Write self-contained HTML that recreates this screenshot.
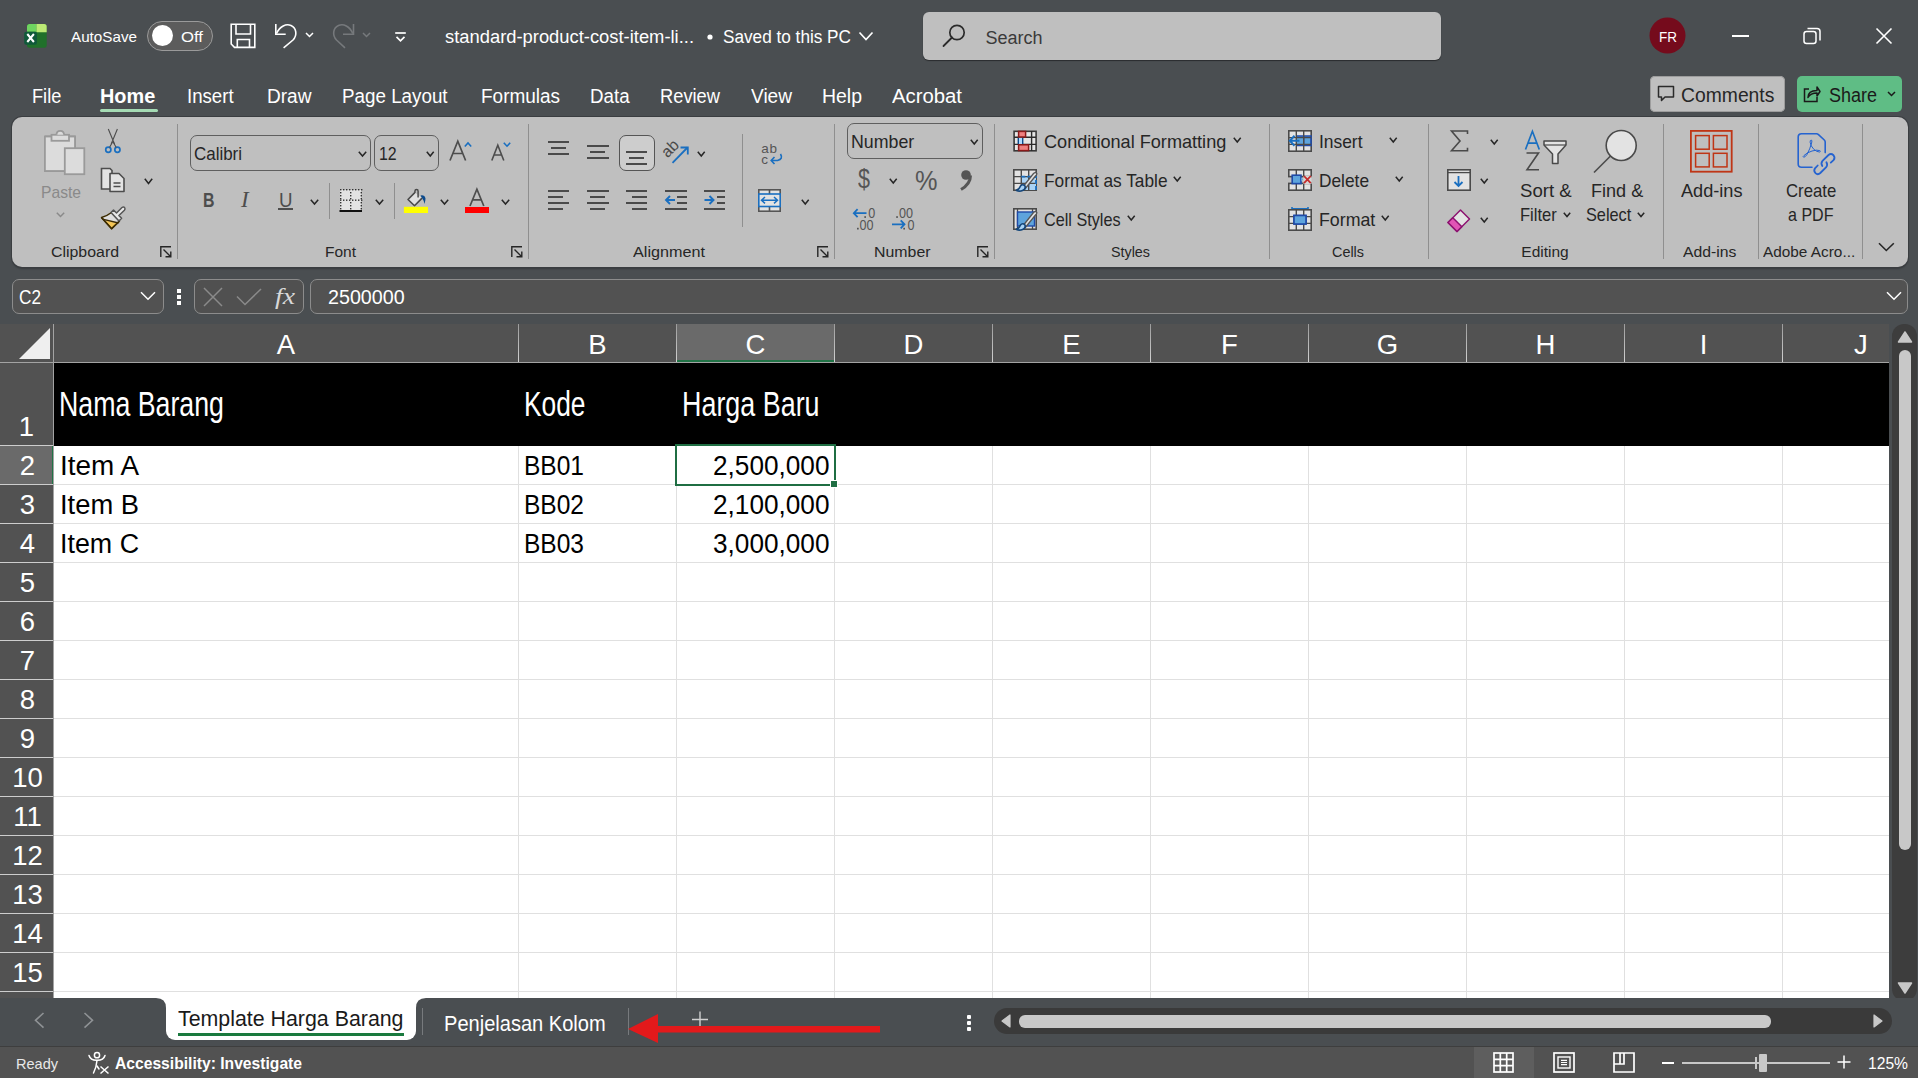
<!DOCTYPE html>
<html><head><meta charset="utf-8">
<style>
*{margin:0;padding:0;box-sizing:border-box}
html,body{width:1918px;height:1078px;overflow:hidden;background:#4a4e51;font-family:"Liberation Sans",sans-serif;position:relative}
.a{position:absolute}
.t{position:absolute;white-space:nowrap;line-height:1}
svg{position:absolute;overflow:visible}
</style></head><body>
<!-- p_title -->
<svg style="left:20px;top:20px;" width="30" height="30" viewBox="0 0 30 30"><rect x="7" y="3.9" width="19.7" height="23.9" rx="2.5" fill="#20702a"/><path d="M9.5 3.9 H16.4 V11.7 H7 V6.4 Q7 3.9 9.5 3.9 Z" fill="#6fd460"/><path d="M16.4 3.9 H24.2 Q26.7 3.9 26.7 6.4 V12.2 H16.4 Z" fill="#bdea75"/><rect x="4.2" y="11.7" width="12.8" height="13.1" rx="2" fill="#10593a"/><path d="M7.3 14 L13.9 22 M13.9 14 L7.3 22" stroke="#fff" stroke-width="2"/></svg>
<div class="t" style="left:71.30px;top:29.20px;font-size:15px;color:#ffffff;transform:scaleX(1.0147);transform-origin:0 0;">AutoSave</div>
<div class="a" style="left:147px;top:21px;width:66px;height:30px;background:#5c5c5c;border:1.5px solid #9a9a9a;border-radius:15px;"></div>
<svg style="left:152px;top:25px;" width="21" height="21" viewBox="0 0 21 21"><circle cx="10.5" cy="10.5" r="10.5" fill="#fff"/></svg>
<div class="t" style="left:181.00px;top:29.30px;font-size:15px;color:#ffffff;transform:scaleX(1.1150);transform-origin:0 0;">Off</div>
<svg style="left:230px;top:23px;" width="26" height="26" viewBox="0 0 26 26"><path d="M1.2 1.2 H24.8 V24.4 H4.5 L1.2 21 Z" fill="none" stroke="#fff" stroke-width="1.6" stroke-linejoin="miter"/><path d="M6 1.2 V11 H20.5 V1.2" fill="none" stroke="#fff" stroke-width="1.6"/><path d="M7.3 24.4 V16.5 H19.5 V24.4" fill="none" stroke="#fff" stroke-width="1.6"/></svg>
<svg style="left:272px;top:22px;" width="28" height="28" viewBox="0 0 28 28"><path d="M3.8 2 V12.3 H13.7" fill="none" stroke="#fff" stroke-width="1.6"/><path d="M4.5 11.5 C8 4 14 1.5 19 3.5 C24.5 6 25.5 13 21 18 L11.6 25.8" fill="none" stroke="#fff" stroke-width="1.6"/></svg>
<svg style="left:305px;top:31px;" width="10" height="8" viewBox="0 0 10 8"><path d="M1 2 L4.5 5.5 L8 2" fill="none" stroke="#fff" stroke-width="1.5"/></svg>
<svg style="left:331px;top:22px;" width="26" height="28" viewBox="0 0 26 28"><path d="M22.5 2 V12.3 H12" fill="none" stroke="#76797c" stroke-width="1.6"/><path d="M21.8 11.5 C18.5 4 12.5 1.5 7.5 3.5 C2 6 1 13 5.5 18 L14 25.8" fill="none" stroke="#76797c" stroke-width="1.6"/></svg>
<svg style="left:362px;top:31px;" width="10" height="8" viewBox="0 0 10 8"><path d="M1 2 L4.5 5.5 L8 2" fill="none" stroke="#76797c" stroke-width="1.5"/></svg>
<svg style="left:394px;top:30.5px;" width="13" height="13" viewBox="0 0 13 13"><path d="M1.2 2 H11.8" stroke="#fff" stroke-width="1.7"/><path d="M2.5 5.8 L6.5 9.8 L10.5 5.8" fill="none" stroke="#fff" stroke-width="1.7"/></svg>
<div class="t" style="left:444.60px;top:28.16px;font-size:18px;color:#ffffff;transform:scaleX(1.0201);transform-origin:0 0;">standard-product-cost-item-li...</div>
<svg style="left:706px;top:33px;" width="8" height="8" viewBox="0 0 8 8"><circle cx="4" cy="4" r="2.6" fill="#fff"/></svg>
<div class="t" style="left:722.80px;top:28.16px;font-size:18px;color:#ffffff;transform:scaleX(0.9547);transform-origin:0 0;">Saved to this PC</div>
<svg style="left:858px;top:31px;" width="16" height="11" viewBox="0 0 16 11"><path d="M1.5 1.5 L8 8.5 L14.5 1.5" fill="none" stroke="#fff" stroke-width="1.7"/></svg>
<div class="a" style="left:923px;top:12px;width:518px;height:48px;background:#bfbfbf;border-radius:6px;box-shadow:0 1px 1px #2a2c2e;"></div>
<svg style="left:942px;top:24px;" width="24" height="24" viewBox="0 0 24 24"><circle cx="15" cy="8.5" r="7.2" fill="none" stroke="#2b2b2b" stroke-width="1.7"/><path d="M10 13.5 L1.5 22" stroke="#2b2b2b" stroke-width="1.8" stroke-linecap="round"/></svg>
<div class="t" style="left:985.40px;top:28.76px;font-size:18px;color:#3a3a3a;">Search</div>
<svg style="left:1649px;top:17px;" width="37" height="37" viewBox="0 0 37 37"><circle cx="18.5" cy="18.5" r="18" fill="#750b1c"/></svg>
<div class="t" style="left:1658.60px;top:29.30px;font-size:15px;color:#fff;transform:scaleX(0.9002);transform-origin:0 0;">FR</div>
<div class="a" style="left:1732px;top:35px;width:17px;height:1.5px;background:#fff;"></div>
<svg style="left:1803px;top:27px;" width="19" height="18" viewBox="0 0 19 18"><rect x="1" y="4.5" width="12" height="12" rx="2.5" fill="none" stroke="#fff" stroke-width="1.5"/><path d="M4.5 1.5 H14 Q17 1.5 17 4.5 V13.5" fill="none" stroke="#fff" stroke-width="1.5"/></svg>
<svg style="left:1875px;top:27px;" width="18" height="18" viewBox="0 0 18 18"><path d="M1.5 1.5 L16.5 16.5 M16.5 1.5 L1.5 16.5" stroke="#fff" stroke-width="1.6"/></svg>
<div class="t" style="left:31.50px;top:86.17px;font-size:20px;color:#ffffff;transform:scaleX(0.9091);transform-origin:0 0;">File</div>
<div class="t" style="left:100.30px;top:86.17px;font-size:20px;color:#ffffff;font-weight:bold;transform:scaleX(0.9934);transform-origin:0 0;">Home</div>
<div class="t" style="left:187.40px;top:86.17px;font-size:20px;color:#ffffff;transform:scaleX(0.9316);transform-origin:0 0;">Insert</div>
<div class="t" style="left:266.50px;top:86.17px;font-size:20px;color:#ffffff;transform:scaleX(0.9535);transform-origin:0 0;">Draw</div>
<div class="t" style="left:342.00px;top:86.17px;font-size:20px;color:#ffffff;transform:scaleX(0.9402);transform-origin:0 0;">Page Layout</div>
<div class="t" style="left:480.70px;top:86.17px;font-size:20px;color:#ffffff;transform:scaleX(0.9490);transform-origin:0 0;">Formulas</div>
<div class="t" style="left:589.70px;top:86.17px;font-size:20px;color:#ffffff;transform:scaleX(0.9373);transform-origin:0 0;">Data</div>
<div class="t" style="left:660.00px;top:86.17px;font-size:20px;color:#ffffff;transform:scaleX(0.9149);transform-origin:0 0;">Review</div>
<div class="t" style="left:751.00px;top:86.17px;font-size:20px;color:#ffffff;transform:scaleX(0.9537);transform-origin:0 0;">View</div>
<div class="t" style="left:822.00px;top:86.17px;font-size:20px;color:#ffffff;transform:scaleX(0.9724);transform-origin:0 0;">Help</div>
<div class="t" style="left:892.00px;top:86.17px;font-size:20px;color:#ffffff;transform:scaleX(1.0156);transform-origin:0 0;">Acrobat</div>
<div class="a" style="left:100px;top:109px;width:58px;height:3px;background:#a5dbb4;border-radius:2px;"></div>
<div class="a" style="left:1650px;top:76px;width:135px;height:36px;background:#bfbfbf;border-radius:5px;box-shadow:inset 0 0 0 1px #9d9d9d;"></div>
<svg style="left:1657px;top:85px;" width="18" height="18" viewBox="0 0 18 18"><path d="M1.5 1.5 H16.5 V12 H8 L4.5 15.5 V12 H1.5 Z" fill="none" stroke="#2b2b2b" stroke-width="1.5" stroke-linejoin="round"/></svg>
<div class="t" style="left:1681.40px;top:85.79px;font-size:19.5px;color:#262626;transform:scaleX(0.9907);transform-origin:0 0;">Comments</div>
<div class="a" style="left:1797px;top:76px;width:105px;height:36px;background:#5fbd85;border-radius:5px;"></div>
<svg style="left:1803px;top:85px;" width="18" height="18" viewBox="0 0 18 18"><path d="M6 4 H1.5 V16.5 H14 V12" fill="none" stroke="#1a1a1a" stroke-width="1.5"/><path d="M5 12.5 C5 7.5 9 5.5 14 5.5 V2 L17 6.5 L14 11 V8 C10 8 7 9 5 12.5 Z" fill="none" stroke="#1a1a1a" stroke-width="1.5" stroke-linejoin="round"/></svg>
<div class="t" style="left:1828.60px;top:85.79px;font-size:19.5px;color:#1a1a1a;transform:scaleX(0.9224);transform-origin:0 0;">Share</div>
<svg style="left:1887px;top:91px;" width="9" height="6" viewBox="0 0 9 6"><path d="M1 1 L4.5 4.5 L8 1" fill="none" stroke="#1a1a1a" stroke-width="1.5"/></svg>
<!-- p_ribbon -->
<div class="a" style="left:12px;top:117px;width:1896px;height:150px;background:#bfbfbf;border-radius:10px;box-shadow:0 0 0 1px #3a3d40,0 2px 2px rgba(0,0,0,0.25);"></div>
<svg style="left:44px;top:130px;" width="41" height="45" viewBox="0 0 41 45"><path d="M0.9 6.5 H31 V17.5 M20.5 41 H0.9 Z" fill="#dcdcdc" stroke="#9a9a9a" stroke-width="1.8" stroke-linejoin="round"/><rect x="0.9" y="6.5" width="30.1" height="34.5" fill="#dcdcdc" stroke="#9a9a9a" stroke-width="1.8"/><rect x="7.5" y="4.8" width="17.5" height="6" fill="#dcdcdc" stroke="#9a9a9a" stroke-width="1.8"/><path d="M12.5 4.8 Q12.5 0.9 16.2 0.9 Q20 0.9 20 4.8" fill="#dcdcdc" stroke="#9a9a9a" stroke-width="1.8"/><rect x="20.8" y="18.2" width="19.5" height="26" fill="#dcdcdc" stroke="#9a9a9a" stroke-width="1.8"/></svg>
<div class="t" style="left:41.00px;top:184.21px;font-size:17px;color:#8a8a8a;transform:scaleX(0.9201);transform-origin:0 0;">Paste</div>
<svg style="left:56px;top:212px;" width="9" height="5" viewBox="0 0 9 5"><path d="M0.8 0.8 L4.5 4.5 L8.2 0.8" fill="none" stroke="#8a8a8a" stroke-width="1.5"/></svg>
<svg style="left:104px;top:128px;" width="18" height="26" viewBox="0 0 18 26"><path d="M4.3 1 L10.5 16 M13.4 1 L7.2 16" stroke="#4d4d4d" stroke-width="1.1"/><circle cx="4.3" cy="21.8" r="2.6" fill="none" stroke="#1a6fc0" stroke-width="1.7"/><circle cx="13.4" cy="21.8" r="2.6" fill="none" stroke="#1a6fc0" stroke-width="1.7"/><path d="M5.5 19.5 L8.5 14 M12.2 19.5 L9.2 14" stroke="#4d4d4d" stroke-width="1.1"/></svg>
<svg style="left:100px;top:167px;" width="26" height="26" viewBox="0 0 26 26"><path d="M1.5 1.5 H10 L12 3.5 V22 H1.5 Z" fill="#e3e3e3" stroke="#4d4d4d" stroke-width="1.6"/><path d="M10 6.5 H19 L24 11.5 V24.5 H10 Z" fill="#e3e3e3" stroke="#4d4d4d" stroke-width="1.6" stroke-linejoin="round"/><path d="M13.5 16 H20.5 M13.5 19.5 H20.5" stroke="#4d4d4d" stroke-width="1.4"/></svg>
<svg style="left:144px;top:178px;" width="9" height="6" viewBox="0 0 9 6"><path d="M0.8 0.8 L4.5 5.5 L8.2 0.8" fill="none" stroke="#262626" stroke-width="1.5"/></svg>
<svg style="left:95px;top:200px;" width="35" height="35" viewBox="0 0 35 35"><path d="M6.5 17.5 Q12 16 16.5 12.5 L24.5 21 L16.6 28.6 Z" fill="#dedede" stroke="#3d2c00" stroke-width="1.5" stroke-linejoin="round"/><path d="M10.5 20.5 L23 23.5 L16.6 28.2 Z" fill="#f5c656"/><path d="M8.5 19.3 L23.5 23" stroke="#3b2a00" stroke-width="1.3"/><path d="M6.5 17.5 L16.6 28.6 L24.5 21" fill="none" stroke="#3d2c00" stroke-width="1.6" stroke-linejoin="round"/><path d="M16 12.5 L18.5 10 L21.5 13 L27 7.5 Q28.5 6.3 29.6 7.6 Q30.6 8.9 29.4 10.2 L23.9 15.5 L26.6 18.3 L24 21 Z" fill="#e8e8e8" stroke="#555" stroke-width="1.5" stroke-linejoin="round"/></svg>
<div class="t" style="left:51.00px;top:244.18px;font-size:15.5px;color:#262626;transform:scaleX(1.0250);transform-origin:0 0;">Clipboard</div>
<svg style="left:160px;top:246px;" width="12" height="12" viewBox="0 0 12 12"><path d="M0.8 11 V0.8 H11" fill="none" stroke="#262626" stroke-width="1.4"/><path d="M3.5 3.5 L10.5 10.5 M5.5 10.8 H10.8 V5.5" fill="none" stroke="#262626" stroke-width="1.4"/></svg>
<div class="a" style="left:177px;top:124px;width:1px;height:135px;background:#8f8f8f;"></div>
<div class="a" style="left:190px;top:135px;width:181px;height:36px;background:transparent;border:1px solid #5f5f5f;border-radius:7px;"></div>
<div class="t" style="left:193.50px;top:145.14px;font-size:18.5px;color:#262626;transform:scaleX(0.9156);transform-origin:0 0;">Calibri</div>
<svg style="left:358px;top:151px;" width="9" height="5.5" viewBox="0 0 9 5.5"><path d="M0.8 0.8 L4.5 5.0 L8.2 0.8" fill="none" stroke="#262626" stroke-width="1.5"/></svg>
<div class="a" style="left:374px;top:135px;width:65px;height:36px;background:transparent;border:1px solid #5f5f5f;border-radius:7px;"></div>
<div class="t" style="left:378.50px;top:145.14px;font-size:18.5px;color:#262626;transform:scaleX(0.8601);transform-origin:0 0;">12</div>
<svg style="left:426px;top:151px;" width="8.5" height="5.5" viewBox="0 0 8.5 5.5"><path d="M0.8 0.8 L4.25 5.0 L7.7 0.8" fill="none" stroke="#262626" stroke-width="1.5"/></svg>
<svg style="left:449px;top:140px;" width="18" height="21" viewBox="0 0 18 21"><path d="M1 20.5 L8.8 1.2 L16.6 20.5 M4.2 13.5 H13.4" fill="none" stroke="#4d4d4d" stroke-width="1.7"/></svg>
<svg style="left:464px;top:142px;" width="8" height="5" viewBox="0 0 8 5"><path d="M0.8 4.5 L4 1 L7.2 4.5" fill="none" stroke="#1a6fc0" stroke-width="1.6"/></svg>
<svg style="left:491px;top:144px;" width="14" height="17" viewBox="0 0 14 17"><path d="M0.8 16.5 L6.8 1.2 L12.8 16.5 M3.3 11 H10.3" fill="none" stroke="#4d4d4d" stroke-width="1.6"/></svg>
<svg style="left:503px;top:142px;" width="8" height="5" viewBox="0 0 8 5"><path d="M0.8 0.8 L4 4.2 L7.2 0.8" fill="none" stroke="#1a6fc0" stroke-width="1.6"/></svg>
<div class="t" style="left:202.50px;top:189.22px;font-size:21px;color:#4d4d4d;font-weight:bold;transform:scaleX(0.7583);transform-origin:0 0;">B</div>
<div class="t" style="left:241.00px;top:187.53px;font-size:23px;color:#4d4d4d;font-style:italic;font-family:'Liberation Serif';">I</div>
<div class="t" style="left:278.50px;top:189.22px;font-size:21px;color:#4d4d4d;transform:scaleX(0.8902);transform-origin:0 0;">U</div>
<div class="a" style="left:278px;top:208px;width:15px;height:1.8px;background:#4d4d4d;"></div>
<svg style="left:310px;top:199px;" width="9" height="5.5" viewBox="0 0 9 5.5"><path d="M0.8 0.8 L4.5 5.0 L8.2 0.8" fill="none" stroke="#262626" stroke-width="1.5"/></svg>
<div class="a" style="left:329px;top:183px;width:1px;height:36px;background:#8f8f8f;"></div>
<svg style="left:339px;top:189px;" width="23" height="23" viewBox="0 0 23 23"><rect x="1" y="1" width="21" height="20" fill="#e3e3e3"/><rect x="1" y="0" width="1.4" height="1.4" fill="#333"/><rect x="1" y="10.5" width="1.4" height="1.4" fill="#333"/><rect x="4" y="0" width="1.4" height="1.4" fill="#333"/><rect x="4" y="10.5" width="1.4" height="1.4" fill="#333"/><rect x="7" y="0" width="1.4" height="1.4" fill="#333"/><rect x="7" y="10.5" width="1.4" height="1.4" fill="#333"/><rect x="10" y="0" width="1.4" height="1.4" fill="#333"/><rect x="10" y="10.5" width="1.4" height="1.4" fill="#333"/><rect x="13" y="0" width="1.4" height="1.4" fill="#333"/><rect x="13" y="10.5" width="1.4" height="1.4" fill="#333"/><rect x="16" y="0" width="1.4" height="1.4" fill="#333"/><rect x="16" y="10.5" width="1.4" height="1.4" fill="#333"/><rect x="19" y="0" width="1.4" height="1.4" fill="#333"/><rect x="19" y="10.5" width="1.4" height="1.4" fill="#333"/><rect x="22" y="0" width="1.4" height="1.4" fill="#333"/><rect x="22" y="10.5" width="1.4" height="1.4" fill="#333"/><rect x="1" y="3" width="1.4" height="1.4" fill="#333"/><rect x="1" y="6" width="1.4" height="1.4" fill="#333"/><rect x="1" y="9" width="1.4" height="1.4" fill="#333"/><rect x="1" y="13" width="1.4" height="1.4" fill="#333"/><rect x="1" y="16" width="1.4" height="1.4" fill="#333"/><rect x="1" y="19" width="1.4" height="1.4" fill="#333"/><rect x="11" y="3" width="1.4" height="1.4" fill="#333"/><rect x="11" y="6" width="1.4" height="1.4" fill="#333"/><rect x="11" y="9" width="1.4" height="1.4" fill="#333"/><rect x="11" y="13" width="1.4" height="1.4" fill="#333"/><rect x="11" y="16" width="1.4" height="1.4" fill="#333"/><rect x="11" y="19" width="1.4" height="1.4" fill="#333"/><rect x="21.6" y="3" width="1.4" height="1.4" fill="#333"/><rect x="21.6" y="6" width="1.4" height="1.4" fill="#333"/><rect x="21.6" y="9" width="1.4" height="1.4" fill="#333"/><rect x="21.6" y="13" width="1.4" height="1.4" fill="#333"/><rect x="21.6" y="16" width="1.4" height="1.4" fill="#333"/><rect x="21.6" y="19" width="1.4" height="1.4" fill="#333"/><rect x="0.5" y="21" width="22.5" height="2" fill="#111"/></svg>
<svg style="left:375px;top:199px;" width="9" height="5.5" viewBox="0 0 9 5.5"><path d="M0.8 0.8 L4.5 5.0 L8.2 0.8" fill="none" stroke="#262626" stroke-width="1.5"/></svg>
<div class="a" style="left:394px;top:183px;width:1px;height:36px;background:#8f8f8f;"></div>
<svg style="left:400px;top:185px;" width="30" height="30" viewBox="0 0 30 30"><path d="M8 14.5 L14.8 7.6 L22 13.1 L14.5 20.8 Z" fill="#e0e0e0"/><path d="M14.8 7.6 L8 14.5 L14.5 20.8 L22 13.1" fill="none" stroke="#4a4a4a" stroke-width="1.6" stroke-linejoin="round"/><path d="M14.9 8 V6.3 Q15 4.6 16.6 4.6 Q18.1 4.6 18.1 6.3 V12.5" fill="none" stroke="#4a4a4a" stroke-width="1.5"/><path d="M20.5 10.5 Q24.5 9.5 25.5 13.5 Q25.5 16.5 24.3 19 Q23.8 15 22 13 Z" fill="#0d4b8c"/><rect x="3.9" y="21.8" width="24.1" height="6.2" fill="#ffff00"/></svg>
<svg style="left:440px;top:199px;" width="9" height="5.5" viewBox="0 0 9 5.5"><path d="M0.8 0.8 L4.5 5.0 L8.2 0.8" fill="none" stroke="#262626" stroke-width="1.5"/></svg>
<svg style="left:469px;top:188px;" width="16" height="19" viewBox="0 0 16 19"><path d="M1 18 L7.9 1.2 L14.8 18 M3.8 11.8 H12" fill="none" stroke="#4d4d4d" stroke-width="1.7"/></svg>
<div class="a" style="left:465px;top:207px;width:24px;height:6px;background:#ff0000;"></div>
<svg style="left:501px;top:199px;" width="9" height="5.5" viewBox="0 0 9 5.5"><path d="M0.8 0.8 L4.5 5.0 L8.2 0.8" fill="none" stroke="#262626" stroke-width="1.5"/></svg>
<div class="t" style="left:325.00px;top:244.18px;font-size:15.5px;color:#262626;">Font</div>
<svg style="left:511px;top:246px;" width="12" height="12" viewBox="0 0 12 12"><path d="M0.8 11 V0.8 H11" fill="none" stroke="#262626" stroke-width="1.4"/><path d="M3.5 3.5 L10.5 10.5 M5.5 10.8 H10.8 V5.5" fill="none" stroke="#262626" stroke-width="1.4"/></svg>
<div class="a" style="left:528px;top:124px;width:1px;height:135px;background:#8f8f8f;"></div>
<div class="a" style="left:548px;top:140.7px;width:21.4px;height:2px;background:#4a4a4a;"></div>
<div class="a" style="left:551.2px;top:146.7px;width:15.100000000000001px;height:2px;background:#4a4a4a;"></div>
<div class="a" style="left:548px;top:152.7px;width:21.4px;height:2px;background:#4a4a4a;"></div>
<div class="a" style="left:587px;top:145px;width:21.6px;height:2px;background:#4a4a4a;"></div>
<div class="a" style="left:590.2px;top:151.1px;width:15.3px;height:2px;background:#4a4a4a;"></div>
<div class="a" style="left:587px;top:157.2px;width:21.6px;height:2px;background:#4a4a4a;"></div>
<div class="a" style="left:619px;top:135px;width:36px;height:36px;background:#cdcdcd;border:1px solid #555;border-radius:7px;"></div>
<div class="a" style="left:626px;top:151.1px;width:21.4px;height:2px;background:#4a4a4a;"></div>
<div class="a" style="left:629.4px;top:157.2px;width:14.9px;height:2px;background:#4a4a4a;"></div>
<div class="a" style="left:626px;top:163.1px;width:21.4px;height:2px;background:#4a4a4a;"></div>
<svg style="left:663px;top:139px;" width="28" height="26" viewBox="0 0 28 26"><text x="0" y="0" transform="translate(4.5,19.5) rotate(-45)" font-family="Liberation Sans" font-size="16" fill="#4a4a4a">ab</text><path d="M9.5 23.8 L24.5 8.5" stroke="#1a6fc0" stroke-width="1.8"/><path d="M17.5 8.5 H24.8 V15.5" fill="none" stroke="#1a6fc0" stroke-width="1.8"/></svg>
<svg style="left:697px;top:151px;" width="8.5" height="5.5" viewBox="0 0 8.5 5.5"><path d="M0.8 0.8 L4.25 5.0 L7.7 0.8" fill="none" stroke="#262626" stroke-width="1.5"/></svg>
<div class="a" style="left:548px;top:190px;width:21.4px;height:2px;background:#4a4a4a;"></div>
<div class="a" style="left:548px;top:196px;width:15.4px;height:2px;background:#4a4a4a;"></div>
<div class="a" style="left:548px;top:202.1px;width:21.4px;height:2px;background:#4a4a4a;"></div>
<div class="a" style="left:548px;top:208px;width:15.4px;height:2px;background:#4a4a4a;"></div>
<div class="a" style="left:587px;top:190px;width:21.6px;height:2px;background:#4a4a4a;"></div>
<div class="a" style="left:590.2px;top:196px;width:15.3px;height:2px;background:#4a4a4a;"></div>
<div class="a" style="left:587px;top:202.1px;width:21.6px;height:2px;background:#4a4a4a;"></div>
<div class="a" style="left:590.2px;top:208px;width:15.3px;height:2px;background:#4a4a4a;"></div>
<div class="a" style="left:626px;top:190px;width:21.4px;height:2px;background:#4a4a4a;"></div>
<div class="a" style="left:632px;top:196px;width:15.399999999999999px;height:2px;background:#4a4a4a;"></div>
<div class="a" style="left:626px;top:202.1px;width:21.4px;height:2px;background:#4a4a4a;"></div>
<div class="a" style="left:632px;top:208px;width:15.399999999999999px;height:2px;background:#4a4a4a;"></div>
<div class="a" style="left:665px;top:190px;width:21.6px;height:2px;background:#4a4a4a;"></div>
<div class="a" style="left:677.3px;top:196px;width:9.3px;height:2px;background:#4a4a4a;"></div>
<div class="a" style="left:677.3px;top:202.1px;width:9.3px;height:2px;background:#4a4a4a;"></div>
<div class="a" style="left:665px;top:208px;width:21.6px;height:2px;background:#4a4a4a;"></div>
<svg style="left:664px;top:195px;" width="12" height="10" viewBox="0 0 12 10"><path d="M11 5 H2 M6 1 L2 5 L6 9" fill="none" stroke="#1a6fc0" stroke-width="1.9"/></svg>
<div class="a" style="left:704px;top:190px;width:21.4px;height:2px;background:#4a4a4a;"></div>
<div class="a" style="left:716.5px;top:196px;width:8.899999999999999px;height:2px;background:#4a4a4a;"></div>
<div class="a" style="left:716.5px;top:202.1px;width:8.899999999999999px;height:2px;background:#4a4a4a;"></div>
<div class="a" style="left:704px;top:208px;width:21.4px;height:2px;background:#4a4a4a;"></div>
<svg style="left:704px;top:195px;" width="12" height="10" viewBox="0 0 12 10"><path d="M0.5 5 H9.5 M5.5 1 L9.5 5 L5.5 9" fill="none" stroke="#1a6fc0" stroke-width="1.9"/></svg>
<div class="a" style="left:742px;top:134px;width:1px;height:93px;background:#8f8f8f;"></div>
<svg style="left:760px;top:140px;" width="24" height="26" viewBox="0 0 24 26"><text x="1.3" y="12.8" font-family="Liberation Sans" font-size="13.5" fill="#555" letter-spacing="0.6">ab</text><text x="1.3" y="23.6" font-family="Liberation Sans" font-size="13.5" fill="#555">c</text><path d="M20.5 14 Q23.5 19 17.5 20.5 H11.5 M14.5 17 L11.2 20.5 L14.5 24" fill="none" stroke="#1a6fc0" stroke-width="1.6"/></svg>
<svg style="left:758px;top:189px;" width="23" height="23" viewBox="0 0 23 23"><rect x="0.8" y="0.8" width="21.4" height="21.4" fill="#e3e3e3" stroke="#555" stroke-width="1.6"/><path d="M11.5 1 V6 M11.5 17 V22" stroke="#555" stroke-width="1.6"/><rect x="0.8" y="5" width="21.4" height="12.5" fill="#e3e3e3" stroke="#1a6fc0" stroke-width="1.6"/><path d="M3.5 11.2 H19.5 M7 8 L3.5 11.2 L7 14.4 M16 8 L19.5 11.2 L16 14.4" fill="none" stroke="#1a6fc0" stroke-width="1.5"/></svg>
<svg style="left:801px;top:199px;" width="8.5" height="5.5" viewBox="0 0 8.5 5.5"><path d="M0.8 0.8 L4.25 5.0 L7.7 0.8" fill="none" stroke="#262626" stroke-width="1.5"/></svg>
<div class="t" style="left:633.00px;top:244.18px;font-size:15.5px;color:#262626;transform:scaleX(1.0446);transform-origin:0 0;">Alignment</div>
<svg style="left:817px;top:246px;" width="12" height="12" viewBox="0 0 12 12"><path d="M0.8 11 V0.8 H11" fill="none" stroke="#262626" stroke-width="1.4"/><path d="M3.5 3.5 L10.5 10.5 M5.5 10.8 H10.8 V5.5" fill="none" stroke="#262626" stroke-width="1.4"/></svg>
<div class="a" style="left:834px;top:124px;width:1px;height:135px;background:#8f8f8f;"></div>
<div class="a" style="left:847px;top:123px;width:136px;height:36px;background:transparent;border:1px solid #5f5f5f;border-radius:7px;"></div>
<div class="t" style="left:851.20px;top:132.94px;font-size:18.5px;color:#262626;transform:scaleX(0.9605);transform-origin:0 0;">Number</div>
<svg style="left:969.8px;top:139px;" width="8.5" height="5.5" viewBox="0 0 8.5 5.5"><path d="M0.8 0.8 L4.25 5.0 L7.7 0.8" fill="none" stroke="#262626" stroke-width="1.5"/></svg>
<div class="t" style="left:858.00px;top:166.34px;font-size:27px;color:#555;transform:scaleX(0.7992);transform-origin:0 0;">$</div>
<svg style="left:889px;top:178px;" width="8.5" height="5.5" viewBox="0 0 8.5 5.5"><path d="M0.8 0.8 L4.25 5.0 L7.7 0.8" fill="none" stroke="#262626" stroke-width="1.5"/></svg>
<div class="t" style="left:914.80px;top:167.74px;font-size:27px;color:#555;transform:scaleX(0.9372);transform-origin:0 0;">%</div>
<svg style="left:958px;top:170px;" width="14" height="21" viewBox="0 0 14 21"><circle cx="8" cy="5" r="4.8" fill="#555"/><path d="M12.5 5.5 Q12.5 14 3 19.5" fill="none" stroke="#555" stroke-width="3"/></svg>
<svg style="left:852px;top:206px;" width="25" height="25" viewBox="0 0 25 25"><path d="M14.5 7.2 H1.8 M5.6 3.2 L1.8 7.2 L5.6 11.2" fill="none" stroke="#1a6fc0" stroke-width="1.8"/><text font-family="Liberation Sans" font-size="14" fill="#555" transform="translate(16.2,11.8) scale(0.9,1)">0</text><rect x="12.3" y="10.2" width="1.7" height="1.7" fill="#555"/><rect x="5" y="21.8" width="1.7" height="1.7" fill="#555"/><text font-family="Liberation Sans" font-size="14" fill="#555" transform="translate(7.6,23.5) scale(0.9,1)">00</text></svg>
<svg style="left:891px;top:206px;" width="25" height="25" viewBox="0 0 25 25"><text font-family="Liberation Sans" font-size="14" fill="#555" transform="translate(8.0,11.8) scale(0.9,1)">00</text><rect x="5.2" y="10.2" width="1.7" height="1.7" fill="#555"/><path d="M1 18.3 H13.5 M9.7 14.3 L13.5 18.3 L9.7 22.3" fill="none" stroke="#1a6fc0" stroke-width="1.8"/><rect x="12.3" y="21.8" width="1.7" height="1.7" fill="#555"/><text font-family="Liberation Sans" font-size="14" fill="#555" transform="translate(16.6,23.5) scale(0.9,1)">0</text></svg>
<div class="t" style="left:873.60px;top:244.18px;font-size:15.5px;color:#262626;transform:scaleX(1.0249);transform-origin:0 0;">Number</div>
<svg style="left:977px;top:246px;" width="12" height="12" viewBox="0 0 12 12"><path d="M0.8 11 V0.8 H11" fill="none" stroke="#262626" stroke-width="1.4"/><path d="M3.5 3.5 L10.5 10.5 M5.5 10.8 H10.8 V5.5" fill="none" stroke="#262626" stroke-width="1.4"/></svg>
<div class="a" style="left:994px;top:124px;width:1px;height:135px;background:#8f8f8f;"></div>
<svg style="left:1010px;top:127px;" width="30" height="28" viewBox="0 0 30 28"><rect x="4.1" y="4.3" width="22" height="19.5" fill="#e6e6e6" stroke="#3a3a3a" stroke-width="1.6"/><path d="M4 10.3 H26 M4 17.4 H26 M21.6 4 V24" stroke="#2a2a2a" stroke-width="1.4"/><rect x="8.6" y="4.4" width="7" height="5.6" fill="#f08080" stroke="#8a1a1a" stroke-width="1.5"/><rect x="8.6" y="17.8" width="10" height="5.8" fill="#f08080" stroke="#8a1a1a" stroke-width="1.5"/><rect x="8.3" y="10.9" width="4.4" height="6" fill="#b0dcff"/><path d="M8.3 10.9 V17 M12.7 10.9 V17" stroke="#0d4b8c" stroke-width="1.4"/></svg>
<div class="t" style="left:1043.50px;top:132.64px;font-size:18.5px;color:#262626;transform:scaleX(0.9795);transform-origin:0 0;">Conditional Formatting</div>
<svg style="left:1233px;top:137px;" width="8.5" height="5.5" viewBox="0 0 8.5 5.5"><path d="M0.8 0.8 L4.25 5.0 L7.7 0.8" fill="none" stroke="#262626" stroke-width="1.5"/></svg>
<svg style="left:1013px;top:169px;" width="24" height="22" viewBox="0 0 24 22"><rect x="0.8" y="0.8" width="22.4" height="20.4" fill="#e3e3e3" stroke="#4a4a4a" stroke-width="1.6"/><rect x="8.3" y="7.6" width="14.7" height="13.4" fill="#a9d3f5"/><path d="M8.3 1 V21 M15.7 1 V21 M1 7.6 H23 M1 14.4 H23" stroke="#4a4a4a" stroke-width="1.4"/><path d="M8.3 7.6 H23 V21" fill="none" stroke="#1a6fc0" stroke-width="1.8" stroke-dasharray="4 2"/><path d="M9 19 L20.5 4.5 Q22.5 2.8 23.5 4 Q24.5 5.2 22.5 7 L11.5 20.5" fill="#e3e3e3" stroke="#555" stroke-width="1.3"/><path d="M3 21 Q5.5 21.5 7.5 17 Q9.5 14.5 12 17 Q13 20 9.5 21.5 Q6 23 3 21 Z" fill="#a9d3f5" stroke="#14467a" stroke-width="1.6"/></svg>
<div class="t" style="left:1043.50px;top:171.64px;font-size:18.5px;color:#262626;transform:scaleX(0.9335);transform-origin:0 0;">Format as Table</div>
<svg style="left:1173px;top:176px;" width="8.5" height="5.5" viewBox="0 0 8.5 5.5"><path d="M0.8 0.8 L4.25 5.0 L7.7 0.8" fill="none" stroke="#262626" stroke-width="1.5"/></svg>
<svg style="left:1013px;top:208px;" width="24" height="22" viewBox="0 0 24 22"><rect x="0.8" y="0.8" width="22.4" height="20.4" fill="#e3e3e3" stroke="#4a4a4a" stroke-width="1.6"/><path d="M4.5 1 V21 M19.5 1 V21" stroke="#4a4a4a" stroke-width="1.3"/><rect x="4.5" y="4" width="17" height="14" fill="#5ea4dc" stroke="#1f4aa8" stroke-width="1.4"/><path d="M9 19 L20.5 4.5 Q22.5 2.8 23.5 4 Q24.5 5.2 22.5 7 L11.5 20.5" fill="#e3e3e3" stroke="#555" stroke-width="1.3"/><path d="M3 21 Q5.5 21.5 7.5 17 Q9.5 14.5 12 17 Q13 20 9.5 21.5 Q6 23 3 21 Z" fill="#a9d3f5" stroke="#14467a" stroke-width="1.6"/></svg>
<div class="t" style="left:1043.50px;top:210.64px;font-size:18.5px;color:#262626;transform:scaleX(0.8754);transform-origin:0 0;">Cell Styles</div>
<svg style="left:1127px;top:215px;" width="8.5" height="5.5" viewBox="0 0 8.5 5.5"><path d="M0.8 0.8 L4.25 5.0 L7.7 0.8" fill="none" stroke="#262626" stroke-width="1.5"/></svg>
<div class="t" style="left:1111.00px;top:244.18px;font-size:15.5px;color:#262626;transform:scaleX(0.9240);transform-origin:0 0;">Styles</div>
<div class="a" style="left:1269px;top:124px;width:1px;height:135px;background:#8f8f8f;"></div>
<svg style="left:1288px;top:130px;" width="24" height="22" viewBox="0 0 24 22"><rect x="0.8" y="0.8" width="22.4" height="20.4" fill="#e3e3e3" stroke="#4a4a4a" stroke-width="1.6"/><rect x="9" y="6" width="14" height="9.5" fill="#5ea4dc"/><path d="M9 6 H23 V15.5 H9" fill="none" stroke="#1f4aa8" stroke-width="1.6"/><path d="M15.7 6 V15.5" stroke="#1f4aa8" stroke-width="1.3"/><path d="M8.3 1 V21 M15.7 1 V21 M1 7.6 H23 M1 14.4 H23" stroke="#4a4a4a" stroke-width="1.4"/><path d="M11.5 10.8 H1.8 M6.5 5.8 L1.8 10.8 L6.5 15.8" fill="none" stroke="#1a6fc0" stroke-width="2"/></svg>
<div class="t" style="left:1318.50px;top:132.64px;font-size:18.5px;color:#262626;transform:scaleX(0.9401);transform-origin:0 0;">Insert</div>
<svg style="left:1389px;top:137px;" width="8.5" height="5.5" viewBox="0 0 8.5 5.5"><path d="M0.8 0.8 L4.25 5.0 L7.7 0.8" fill="none" stroke="#262626" stroke-width="1.5"/></svg>
<svg style="left:1288px;top:169px;" width="24" height="22" viewBox="0 0 24 22"><rect x="0.8" y="0.8" width="22.4" height="6.8" fill="#e3e3e3" stroke="#4a4a4a" stroke-width="1.6"/><rect x="0.8" y="14.4" width="22.4" height="6.8" fill="#e3e3e3" stroke="#4a4a4a" stroke-width="1.6"/><path d="M8.3 1 V7.6 M15.7 1 V7.6 M8.3 14.4 V21 M15.7 14.4 V21" stroke="#4a4a4a" stroke-width="1.4"/><rect x="15.5" y="7" width="8" height="8" fill="#d6d6d6"/><rect x="4.2" y="6.2" width="8.8" height="8.4" fill="#5ea4dc" stroke="#1f4aa8" stroke-width="1.6"/><path d="M13 8.3 L15 10.4 L13 12.5 Z" fill="#5ea4dc"/><path d="M16 7 L22.8 14.2 M22.8 7 L16 14.2" stroke="#c42b2b" stroke-width="1.8"/></svg>
<div class="t" style="left:1318.50px;top:171.64px;font-size:18.5px;color:#262626;transform:scaleX(0.9350);transform-origin:0 0;">Delete</div>
<svg style="left:1395px;top:176px;" width="8.5" height="5.5" viewBox="0 0 8.5 5.5"><path d="M0.8 0.8 L4.25 5.0 L7.7 0.8" fill="none" stroke="#262626" stroke-width="1.5"/></svg>
<svg style="left:1288px;top:206px;" width="24" height="25" viewBox="0 0 24 25"><path d="M4 1 V4.5 M20 1 V4.5 M4 2.8 H20" stroke="#1a6fc0" stroke-width="1.6"/><g transform="translate(0,3)"><rect x="0.8" y="0.8" width="22.4" height="20.4" fill="#e3e3e3" stroke="#4a4a4a" stroke-width="1.6"/><rect x="6" y="6.5" width="12" height="8.5" fill="#5ea4dc" stroke="#1f4aa8" stroke-width="1.6"/><path d="M8.3 1 V21 M15.7 1 V21 M1 7.6 H23 M1 14.4 H23" stroke="#4a4a4a" stroke-width="1.4"/><rect x="6" y="6.5" width="12" height="8.5" fill="#5ea4dc" stroke="#1f4aa8" stroke-width="1.6"/></g></svg>
<div class="t" style="left:1318.50px;top:210.64px;font-size:18.5px;color:#262626;transform:scaleX(0.9609);transform-origin:0 0;">Format</div>
<svg style="left:1381px;top:215px;" width="8.5" height="5.5" viewBox="0 0 8.5 5.5"><path d="M0.8 0.8 L4.25 5.0 L7.7 0.8" fill="none" stroke="#262626" stroke-width="1.5"/></svg>
<div class="t" style="left:1332.00px;top:244.18px;font-size:15.5px;color:#262626;transform:scaleX(0.9288);transform-origin:0 0;">Cells</div>
<div class="a" style="left:1428px;top:124px;width:1px;height:135px;background:#8f8f8f;"></div>
<svg style="left:1450px;top:130px;" width="19" height="22" viewBox="0 0 19 22"><path d="M17.5 4 V1 H1.5 L10 11 L1.5 20.8 H17.5 V17.8" fill="none" stroke="#4a4a4a" stroke-width="1.6" stroke-linejoin="miter"/></svg>
<svg style="left:1490px;top:139px;" width="8.5" height="5.5" viewBox="0 0 8.5 5.5"><path d="M0.8 0.8 L4.25 5.0 L7.7 0.8" fill="none" stroke="#262626" stroke-width="1.5"/></svg>
<svg style="left:1447px;top:169px;" width="24" height="22" viewBox="0 0 24 22"><rect x="0.8" y="0.8" width="22.4" height="20.4" fill="#e3e3e3" stroke="#4a4a4a" stroke-width="1.6"/><path d="M1 3.6 H23" stroke="#4a4a4a" stroke-width="1.3"/><path d="M11.5 7 V17 M7.5 13 L11.5 17 L15.5 13" fill="none" stroke="#1a6fc0" stroke-width="1.8"/></svg>
<svg style="left:1480px;top:178px;" width="8.5" height="5.5" viewBox="0 0 8.5 5.5"><path d="M0.8 0.8 L4.25 5.0 L7.7 0.8" fill="none" stroke="#262626" stroke-width="1.5"/></svg>
<svg style="left:1447px;top:207px;" width="24" height="24" viewBox="0 0 24 24"><path d="M1 15.5 L13.5 3 L22.5 12 L10 24.5 Z" fill="#e3e3e3" stroke="#8c1270" stroke-width="1.5" stroke-linejoin="round"/><path d="M1 15.5 L5.8 10.7 L14.8 19.7 L10 24.5 Z" fill="#e155b5" stroke="#8c1270" stroke-width="1.5" stroke-linejoin="round"/></svg>
<svg style="left:1480px;top:217px;" width="8.5" height="5.5" viewBox="0 0 8.5 5.5"><path d="M0.8 0.8 L4.25 5.0 L7.7 0.8" fill="none" stroke="#262626" stroke-width="1.5"/></svg>
<svg style="left:1524px;top:130px;" width="17" height="21" viewBox="0 0 17 21"><path d="M1.5 19.5 L8.4 1.3 L15.3 19.5 M4.2 13.2 H12.6" fill="none" stroke="#1a6fc0" stroke-width="1.7"/></svg>
<svg style="left:1525px;top:152px;" width="15" height="19" viewBox="0 0 15 19"><path d="M1.5 1 H13.5 L2 17.8 H14" fill="none" stroke="#4a4a4a" stroke-width="1.6"/></svg>
<svg style="left:1543px;top:140px;" width="25" height="25" viewBox="0 0 25 25"><path d="M1 1 H23 V5 L15 14 V23.5 H9.5 V14 L1 5 Z" fill="#e3e3e3" stroke="#4a4a4a" stroke-width="1.5" stroke-linejoin="round"/><path d="M1 5 H23" stroke="#4a4a4a" stroke-width="1.2"/></svg>
<div class="t" style="left:1520.30px;top:182.24px;font-size:18.5px;color:#262626;transform:scaleX(1.0057);transform-origin:0 0;">Sort &amp;</div>
<div class="t" style="left:1520.30px;top:205.74px;font-size:18.5px;color:#262626;transform:scaleX(0.8927);transform-origin:0 0;">Filter</div>
<svg style="left:1563px;top:211.5px;" width="8" height="5" viewBox="0 0 8 5"><path d="M0.8 0.8 L4.0 4.5 L7.2 0.8" fill="none" stroke="#262626" stroke-width="1.5"/></svg>
<svg style="left:1593px;top:129px;" width="45" height="46" viewBox="0 0 45 46"><circle cx="28.2" cy="16.5" r="15" fill="#e3e3e3" stroke="#4a4a4a" stroke-width="1.6"/><path d="M17.5 27 L1 43.5" stroke="#4a4a4a" stroke-width="1.6"/></svg>
<div class="t" style="left:1590.80px;top:182.24px;font-size:18.5px;color:#262626;transform:scaleX(0.9763);transform-origin:0 0;">Find &amp;</div>
<div class="t" style="left:1585.70px;top:205.74px;font-size:18.5px;color:#262626;transform:scaleX(0.8810);transform-origin:0 0;">Select</div>
<svg style="left:1637.3px;top:211.5px;" width="8" height="5" viewBox="0 0 8 5"><path d="M0.8 0.8 L4.0 4.5 L7.2 0.8" fill="none" stroke="#262626" stroke-width="1.5"/></svg>
<div class="t" style="left:1521.30px;top:244.18px;font-size:15.5px;color:#262626;">Editing</div>
<div class="a" style="left:1663px;top:124px;width:1px;height:135px;background:#8f8f8f;"></div>
<svg style="left:1690px;top:130px;" width="43" height="43" viewBox="0 0 43 43"><rect x="0.9" y="0.9" width="40.8" height="40.8" fill="none" stroke="#bf3515" stroke-width="1.8"/><rect x="5.6" y="5.6" width="13.6" height="13.6" fill="none" stroke="#bf3515" stroke-width="1.5"/><rect x="23.4" y="5.6" width="13.6" height="13.6" fill="none" stroke="#bf3515" stroke-width="1.5"/><rect x="5.6" y="23.3" width="13.6" height="13.6" fill="none" stroke="#bf3515" stroke-width="1.5"/><rect x="23.4" y="23.3" width="13.6" height="13.6" fill="none" stroke="#bf3515" stroke-width="1.5"/></svg>
<div class="t" style="left:1680.50px;top:182.24px;font-size:18.5px;color:#262626;transform:scaleX(0.9804);transform-origin:0 0;">Add-ins</div>
<div class="t" style="left:1683.00px;top:244.18px;font-size:15.5px;color:#262626;transform:scaleX(1.0142);transform-origin:0 0;">Add-ins</div>
<div class="a" style="left:1758px;top:124px;width:1px;height:135px;background:#8f8f8f;"></div>
<svg style="left:1790px;top:125px;" width="55" height="55" viewBox="0 0 55 55"><path d="M22 42.3 H11.5 Q8.2 42.3 8.2 39 V12 Q8.2 8.7 11.5 8.7 H26.5 Q27.5 8.7 28.5 9.6 L34.3 15 Q35.2 16 35.2 17 V27.6" fill="none" stroke="#2563d0" stroke-width="1.6" stroke-linecap="round" stroke-linejoin="round"/><path d="M14 30.5 Q12.5 31.8 13.6 32.2 Q15 32.5 17 29.5 Q20 24 21.6 18 Q22.4 15.3 21.3 15 Q20 15 20.1 17.2 Q20.6 21 24 24.5 Q27 27 29.6 27 Q31 26.6 29.8 25.6 Q27 24.5 22 26 Q17 27.5 14 30.5 Z" fill="none" stroke="#2563d0" stroke-width="1"/><path d="M27.7 40.5 L25 43.3 Q23.3 46 25.5 48.2 Q27.8 50.3 30.3 48 L36.2 42.2 Q38 40 36.4 37.3" fill="none" stroke="#2563d0" stroke-width="1.8" stroke-linecap="round"/><path d="M32.3 41 Q30.5 38 32.5 35.8 L38.5 30 Q41 28 43.5 30.2 Q45.5 32.8 43.5 35.2 L40.8 37.6" fill="none" stroke="#2563d0" stroke-width="1.8" stroke-linecap="round"/></svg>
<div class="t" style="left:1786.10px;top:182.24px;font-size:18.5px;color:#262626;transform:scaleX(0.9040);transform-origin:0 0;">Create</div>
<div class="t" style="left:1788.20px;top:205.74px;font-size:18.5px;color:#262626;transform:scaleX(0.8679);transform-origin:0 0;">a PDF</div>
<div class="t" style="left:1763.30px;top:244.18px;font-size:15.5px;color:#262626;transform:scaleX(0.9907);transform-origin:0 0;">Adobe Acro...</div>
<div class="a" style="left:1862px;top:124px;width:1px;height:135px;background:#8f8f8f;"></div>
<svg style="left:1878px;top:242px;" width="17" height="10" viewBox="0 0 17 10"><path d="M1 1.2 L8.3 8.5 L15.8 1.2" fill="none" stroke="#262626" stroke-width="1.6"/></svg>
<!-- p_fbar -->
<div class="a" style="left:12px;top:279px;width:152px;height:35px;background:#525252;border:1px solid #8c8c8c;border-radius:7px;"></div>
<div class="t" style="left:19.00px;top:286.97px;font-size:20px;color:#fff;transform:scaleX(0.8605);transform-origin:0 0;">C2</div>
<svg style="left:140px;top:291px;" width="16" height="10" viewBox="0 0 16 10"><path d="M1 1.2 L8 8.3 L15 1.2" fill="none" stroke="#fff" stroke-width="1.5"/></svg>
<div class="a" style="left:177px;top:289px;width:4px;height:3.5px;background:#fff;"></div>
<div class="a" style="left:177px;top:295px;width:4px;height:3.5px;background:#fff;"></div>
<div class="a" style="left:177px;top:301px;width:4px;height:3.5px;background:#fff;"></div>
<div class="a" style="left:194px;top:279px;width:110px;height:35px;background:#505050;border:1px solid #8c8c8c;border-radius:7px;"></div>
<svg style="left:203px;top:287px;" width="20" height="20" viewBox="0 0 20 20"><path d="M1 1 L19 19 M19 1 L1 19" stroke="#8a8a8a" stroke-width="1.5"/></svg>
<svg style="left:236px;top:288px;" width="26" height="18" viewBox="0 0 26 18"><path d="M1 8.5 L9 16.5 L25 1" fill="none" stroke="#8a8a8a" stroke-width="1.5"/></svg>
<div class="t" style="left:275.00px;top:284.18px;font-size:24px;color:#d8d8d8;transform:scaleX(1.1517);transform-origin:0 0;font-family:'Liberation Serif';font-style:italic;">fx</div>
<div class="a" style="left:310px;top:279px;width:1598px;height:35px;background:#525252;border:1px solid #8c8c8c;border-radius:7px;"></div>
<div class="a" style="left:908px;top:279px;width:0px;height:0px;background:transparent;"></div>
<div class="t" style="left:327.60px;top:286.97px;font-size:20px;color:#fff;transform:scaleX(0.9838);transform-origin:0 0;">2500000</div>
<svg style="left:1886px;top:291px;" width="16" height="10" viewBox="0 0 16 10"><path d="M1 1.2 L8 8.3 L15 1.2" fill="none" stroke="#fff" stroke-width="1.5"/></svg>
<!-- p_grid -->
<div class="a" style="left:54px;top:362px;width:1835px;height:636px;background:#fff;"></div>
<div class="a" style="left:0px;top:324px;width:1889px;height:38px;background:#525252;"></div>
<div class="a" style="left:0px;top:362px;width:53px;height:636px;background:#525252;"></div>
<div class="a" style="left:677px;top:324px;width:157px;height:38px;background:#6a6a6a;"></div>
<div class="a" style="left:677px;top:360px;width:157px;height:2px;background:#217346;"></div>
<div class="a" style="left:0px;top:446px;width:53px;height:38px;background:#6a6a6a;"></div>
<div class="a" style="left:52px;top:446px;width:2px;height:38px;background:#217346;"></div>
<div class="a" style="left:0px;top:362px;width:1889px;height:1px;background:#a3a3a3;"></div>
<div class="a" style="left:53px;top:324px;width:1px;height:674px;background:#a3a3a3;"></div>
<div class="a" style="left:518px;top:324px;width:1px;height:38px;background:linear-gradient(#9c9c9c,#d2d2d2);"></div>
<div class="a" style="left:676px;top:324px;width:1px;height:38px;background:linear-gradient(#9c9c9c,#d2d2d2);"></div>
<div class="a" style="left:834px;top:324px;width:1px;height:38px;background:linear-gradient(#9c9c9c,#d2d2d2);"></div>
<div class="a" style="left:992px;top:324px;width:1px;height:38px;background:linear-gradient(#9c9c9c,#d2d2d2);"></div>
<div class="a" style="left:1150px;top:324px;width:1px;height:38px;background:linear-gradient(#9c9c9c,#d2d2d2);"></div>
<div class="a" style="left:1308px;top:324px;width:1px;height:38px;background:linear-gradient(#9c9c9c,#d2d2d2);"></div>
<div class="a" style="left:1466px;top:324px;width:1px;height:38px;background:linear-gradient(#9c9c9c,#d2d2d2);"></div>
<div class="a" style="left:1624px;top:324px;width:1px;height:38px;background:linear-gradient(#9c9c9c,#d2d2d2);"></div>
<div class="a" style="left:1782px;top:324px;width:1px;height:38px;background:linear-gradient(#9c9c9c,#d2d2d2);"></div>
<div class="a" style="left:54px;top:484px;width:1835px;height:1px;background:#e0e0e0;"></div>
<div class="a" style="left:0px;top:484px;width:53px;height:1px;background:#cdcdcd;"></div>
<div class="a" style="left:54px;top:523px;width:1835px;height:1px;background:#e0e0e0;"></div>
<div class="a" style="left:0px;top:523px;width:53px;height:1px;background:#cdcdcd;"></div>
<div class="a" style="left:54px;top:562px;width:1835px;height:1px;background:#e0e0e0;"></div>
<div class="a" style="left:0px;top:562px;width:53px;height:1px;background:#cdcdcd;"></div>
<div class="a" style="left:54px;top:601px;width:1835px;height:1px;background:#e0e0e0;"></div>
<div class="a" style="left:0px;top:601px;width:53px;height:1px;background:#cdcdcd;"></div>
<div class="a" style="left:54px;top:640px;width:1835px;height:1px;background:#e0e0e0;"></div>
<div class="a" style="left:0px;top:640px;width:53px;height:1px;background:#cdcdcd;"></div>
<div class="a" style="left:54px;top:679px;width:1835px;height:1px;background:#e0e0e0;"></div>
<div class="a" style="left:0px;top:679px;width:53px;height:1px;background:#cdcdcd;"></div>
<div class="a" style="left:54px;top:718px;width:1835px;height:1px;background:#e0e0e0;"></div>
<div class="a" style="left:0px;top:718px;width:53px;height:1px;background:#cdcdcd;"></div>
<div class="a" style="left:54px;top:757px;width:1835px;height:1px;background:#e0e0e0;"></div>
<div class="a" style="left:0px;top:757px;width:53px;height:1px;background:#cdcdcd;"></div>
<div class="a" style="left:54px;top:796px;width:1835px;height:1px;background:#e0e0e0;"></div>
<div class="a" style="left:0px;top:796px;width:53px;height:1px;background:#cdcdcd;"></div>
<div class="a" style="left:54px;top:835px;width:1835px;height:1px;background:#e0e0e0;"></div>
<div class="a" style="left:0px;top:835px;width:53px;height:1px;background:#cdcdcd;"></div>
<div class="a" style="left:54px;top:874px;width:1835px;height:1px;background:#e0e0e0;"></div>
<div class="a" style="left:0px;top:874px;width:53px;height:1px;background:#cdcdcd;"></div>
<div class="a" style="left:54px;top:913px;width:1835px;height:1px;background:#e0e0e0;"></div>
<div class="a" style="left:0px;top:913px;width:53px;height:1px;background:#cdcdcd;"></div>
<div class="a" style="left:54px;top:952px;width:1835px;height:1px;background:#e0e0e0;"></div>
<div class="a" style="left:0px;top:952px;width:53px;height:1px;background:#cdcdcd;"></div>
<div class="a" style="left:54px;top:991px;width:1835px;height:1px;background:#e0e0e0;"></div>
<div class="a" style="left:0px;top:991px;width:53px;height:1px;background:#cdcdcd;"></div>
<div class="a" style="left:0px;top:445px;width:53px;height:1px;background:#cdcdcd;"></div>
<div class="a" style="left:518px;top:446px;width:1px;height:552px;background:#e0e0e0;"></div>
<div class="a" style="left:676px;top:446px;width:1px;height:552px;background:#e0e0e0;"></div>
<div class="a" style="left:834px;top:446px;width:1px;height:552px;background:#e0e0e0;"></div>
<div class="a" style="left:992px;top:446px;width:1px;height:552px;background:#e0e0e0;"></div>
<div class="a" style="left:1150px;top:446px;width:1px;height:552px;background:#e0e0e0;"></div>
<div class="a" style="left:1308px;top:446px;width:1px;height:552px;background:#e0e0e0;"></div>
<div class="a" style="left:1466px;top:446px;width:1px;height:552px;background:#e0e0e0;"></div>
<div class="a" style="left:1624px;top:446px;width:1px;height:552px;background:#e0e0e0;"></div>
<div class="a" style="left:1782px;top:446px;width:1px;height:552px;background:#e0e0e0;"></div>
<div class="a" style="left:54px;top:363px;width:1835px;height:83px;background:#000;"></div>
<svg style="left:0px;top:324px;" width="53" height="38" viewBox="0 0 53 38"><polygon points="19,35 50,35 50,4" fill="#efefef"/></svg>
<div class="t" style="left:276.83px;top:330.52px;font-size:27.5px;color:#fff;">A</div>
<div class="t" style="left:588.33px;top:330.52px;font-size:27.5px;color:#fff;">B</div>
<div class="t" style="left:745.57px;top:330.52px;font-size:27.5px;color:#fff;">C</div>
<div class="t" style="left:903.57px;top:330.52px;font-size:27.5px;color:#fff;">D</div>
<div class="t" style="left:1062.33px;top:330.52px;font-size:27.5px;color:#fff;">E</div>
<div class="t" style="left:1221.10px;top:330.52px;font-size:27.5px;color:#fff;">F</div>
<div class="t" style="left:1376.80px;top:330.52px;font-size:27.5px;color:#fff;">G</div>
<div class="t" style="left:1535.57px;top:330.52px;font-size:27.5px;color:#fff;">H</div>
<div class="t" style="left:1699.68px;top:330.52px;font-size:27.5px;color:#fff;">I</div>
<div class="t" style="left:1854.12px;top:330.52px;font-size:27.5px;color:#fff;">J</div>
<div class="t" style="left:18.85px;top:412.52px;font-size:27.5px;color:#fff;">1</div>
<div class="t" style="left:19.85px;top:452.42px;font-size:27.5px;color:#fff;">2</div>
<div class="t" style="left:19.85px;top:491.42px;font-size:27.5px;color:#fff;">3</div>
<div class="t" style="left:19.85px;top:530.42px;font-size:27.5px;color:#fff;">4</div>
<div class="t" style="left:19.85px;top:569.42px;font-size:27.5px;color:#fff;">5</div>
<div class="t" style="left:19.85px;top:608.42px;font-size:27.5px;color:#fff;">6</div>
<div class="t" style="left:19.85px;top:647.42px;font-size:27.5px;color:#fff;">7</div>
<div class="t" style="left:19.85px;top:686.42px;font-size:27.5px;color:#fff;">8</div>
<div class="t" style="left:19.85px;top:725.42px;font-size:27.5px;color:#fff;">9</div>
<div class="t" style="left:12.21px;top:764.42px;font-size:27.5px;color:#fff;">10</div>
<div class="t" style="left:13.23px;top:803.42px;font-size:27.5px;color:#fff;">11</div>
<div class="t" style="left:12.21px;top:842.42px;font-size:27.5px;color:#fff;">12</div>
<div class="t" style="left:12.21px;top:881.42px;font-size:27.5px;color:#fff;">13</div>
<div class="t" style="left:12.21px;top:920.42px;font-size:27.5px;color:#fff;">14</div>
<div class="t" style="left:12.21px;top:959.42px;font-size:27.5px;color:#fff;">15</div>
<div class="t" style="left:59.40px;top:386.32px;font-size:35.3px;color:#fff;transform:scaleX(0.7576);transform-origin:0 0;">Nama Barang</div>
<div class="t" style="left:524.00px;top:386.32px;font-size:35.3px;color:#fff;transform:scaleX(0.7460);transform-origin:0 0;">Kode</div>
<div class="t" style="left:681.70px;top:386.32px;font-size:35.3px;color:#fff;transform:scaleX(0.7622);transform-origin:0 0;">Harga Baru</div>
<div class="t" style="left:60.00px;top:452.79px;font-size:27px;color:#000;transform:scaleX(1.0323);transform-origin:0 0;">Item A</div>
<div class="t" style="left:524.00px;top:452.79px;font-size:27px;color:#000;transform:scaleX(0.9084);transform-origin:0 0;">BB01</div>
<div class="t" style="left:712.50px;top:452.79px;font-size:27px;color:#000;transform:scaleX(0.9699);transform-origin:0 0;">2,500,000</div>
<div class="t" style="left:60.00px;top:491.79px;font-size:27px;color:#000;transform:scaleX(1.0126);transform-origin:0 0;">Item B</div>
<div class="t" style="left:524.00px;top:491.79px;font-size:27px;color:#000;transform:scaleX(0.9084);transform-origin:0 0;">BB02</div>
<div class="t" style="left:712.50px;top:491.79px;font-size:27px;color:#000;transform:scaleX(0.9699);transform-origin:0 0;">2,100,000</div>
<div class="t" style="left:60.00px;top:530.79px;font-size:27px;color:#000;transform:scaleX(0.9936);transform-origin:0 0;">Item C</div>
<div class="t" style="left:524.00px;top:530.79px;font-size:27px;color:#000;transform:scaleX(0.9084);transform-origin:0 0;">BB03</div>
<div class="t" style="left:712.50px;top:530.79px;font-size:27px;color:#000;transform:scaleX(0.9699);transform-origin:0 0;">3,000,000</div>
<div class="a" style="left:675px;top:444px;width:161px;height:42px;background:transparent;border:2px solid #1f6e43;"></div>
<div class="a" style="left:831px;top:481px;width:6px;height:6px;background:#1f6e43;box-shadow:0 0 0 1px #fff;"></div>
<div class="a" style="left:1892px;top:324px;width:25px;height:677px;background:#3d3d3d;border-radius:12px;"></div>
<svg style="left:1892px;top:324px;" width="25" height="677" viewBox="0 0 25 677"><polygon points="6.5,18 19.5,18 13,8" fill="#c8c8c8" stroke="#c8c8c8" stroke-width="1.5" stroke-linejoin="round"/><polygon points="6.5,659 19.5,659 13,669" fill="#c8c8c8" stroke="#c8c8c8" stroke-width="1.5" stroke-linejoin="round"/></svg>
<div class="a" style="left:1899px;top:350px;width:12px;height:500px;background:#c8c8c8;border-radius:6px;"></div>
<!-- p_tabs -->
<div class="a" style="left:0px;top:998px;width:1918px;height:48px;background:#4a4e51;"></div>
<div class="a" style="left:166px;top:998px;width:250px;height:42px;background:#fff;border-radius:0 0 9px 9px;"></div>
<svg style="left:156px;top:998px;" width="10" height="10" viewBox="0 0 10 10"><path d="M0 0 H10 V10 Q10 0 0 0 Z" fill="#fff"/></svg>
<svg style="left:416px;top:998px;" width="10" height="10" viewBox="0 0 10 10"><path d="M10 0 H0 V10 Q0 0 10 0 Z" fill="#fff"/></svg>
<svg style="left:33px;top:1012px;" width="12" height="17" viewBox="0 0 12 17"><path d="M10.5 1 L2.5 8.3 L10.5 15.7" fill="none" stroke="#8f9295" stroke-width="1.6"/></svg>
<svg style="left:83px;top:1012px;" width="12" height="17" viewBox="0 0 12 17"><path d="M1.5 1 L9.5 8.3 L1.5 15.7" fill="none" stroke="#8f9295" stroke-width="1.6"/></svg>
<div class="t" style="left:178.00px;top:1008.38px;font-size:22px;color:#1a1a1a;transform:scaleX(0.9705);transform-origin:0 0;">Template Harga Barang</div>
<div class="a" style="left:178px;top:1033px;width:226px;height:3px;background:#1a7a3e;"></div>
<div class="a" style="left:422px;top:1008px;width:1px;height:27px;background:#777a7d;"></div>
<div class="t" style="left:443.80px;top:1013.38px;font-size:22px;color:#fff;transform:scaleX(0.9118);transform-origin:0 0;">Penjelasan Kolom</div>
<div class="a" style="left:628px;top:1008px;width:1px;height:27px;background:#777a7d;"></div>
<svg style="left:691px;top:1011px;" width="18" height="17" viewBox="0 0 18 17"><path d="M9 0.5 V16.5 M1 8.5 H17" stroke="#d0d0d0" stroke-width="1.4"/></svg>
<svg style="left:626px;top:1012px;" width="256" height="34" viewBox="0 0 256 34"><path d="M2 17 L32 2 V31 Z" fill="#e3191b"/><rect x="30" y="14" width="224" height="6.5" fill="#e3191b"/></svg>
<div class="a" style="left:967px;top:1015px;width:4px;height:4px;background:#fff;border-radius:1px;"></div>
<div class="a" style="left:967px;top:1021px;width:4px;height:4px;background:#fff;border-radius:1px;"></div>
<div class="a" style="left:967px;top:1027px;width:4px;height:4px;background:#fff;border-radius:1px;"></div>
<div class="a" style="left:994px;top:1008px;width:898px;height:26px;background:#3a3a3a;border-radius:13px;"></div>
<svg style="left:1001px;top:1014px;" width="10" height="14" viewBox="0 0 10 14"><path d="M9 1 V13 L1 7 Z" fill="#c8c8c8" stroke="#c8c8c8" stroke-linejoin="round" stroke-width="1.2"/></svg>
<div class="a" style="left:1019px;top:1015px;width:752px;height:12.5px;background:#c8c8c8;border-radius:6px;"></div>
<svg style="left:1873px;top:1014px;" width="10" height="14" viewBox="0 0 10 14"><path d="M1 1 V13 L9 7 Z" fill="#c8c8c8" stroke="#c8c8c8" stroke-linejoin="round" stroke-width="1.2"/></svg>
<div class="a" style="left:0px;top:1046px;width:1918px;height:32px;background:#525252;"></div>
<div class="a" style="left:0px;top:1046px;width:1918px;height:1px;background:#3e3e3e;"></div>
<div class="t" style="left:16.30px;top:1056.10px;font-size:15px;color:#e8e8e8;transform:scaleX(0.9686);transform-origin:0 0;">Ready</div>
<svg style="left:87px;top:1051px;" width="24" height="24" viewBox="0 0 24 24"><circle cx="10" cy="4.2" r="2.6" fill="none" stroke="#fff" stroke-width="1.5"/><path d="M2 4.5 Q3.5 9.5 10 9.3 Q16.5 9.5 18 4.5" fill="none" stroke="#fff" stroke-width="1.5" stroke-linecap="round"/><path d="M10 9.5 Q9.5 16 6.5 22" fill="none" stroke="#fff" stroke-width="1.5" stroke-linecap="round"/><path d="M10 15 L12 18" stroke="#fff" stroke-width="1.5" stroke-linecap="round"/><path d="M13.5 15.5 L21.5 22.5 M21.5 15.5 L13.5 22.5" stroke="#fff" stroke-width="1.5"/></svg>
<div class="t" style="left:115.40px;top:1055.86px;font-size:16px;color:#fff;font-weight:bold;transform:scaleX(0.9781);transform-origin:0 0;">Accessibility: Investigate</div>
<div class="a" style="left:1474px;top:1047px;width:60px;height:31px;background:#5e5e5e;"></div>
<svg style="left:1493px;top:1052px;" width="21" height="21" viewBox="0 0 21 21"><rect x="1" y="1" width="19" height="19" fill="none" stroke="#fff" stroke-width="1.7"/><path d="M7.3 1 V20 M13.7 1 V20 M1 7.3 H20 M1 13.7 H20" stroke="#fff" stroke-width="1.7"/></svg>
<svg style="left:1553px;top:1052px;" width="22" height="21" viewBox="0 0 22 21"><rect x="1" y="1" width="20" height="19" fill="none" stroke="#fff" stroke-width="1.7"/><rect x="5" y="5" width="12" height="11" fill="none" stroke="#fff" stroke-width="1.4"/><path d="M8 8.3 H14 M8 10.5 H14 M8 12.7 H14" stroke="#fff" stroke-width="1.2"/></svg>
<svg style="left:1613px;top:1052px;" width="22" height="21" viewBox="0 0 22 21"><path d="M1 1 H21 V20 H1 Z M1 12 H11 V1 M7 1 V12" fill="none" stroke="#fff" stroke-width="1.7"/></svg>
<div class="a" style="left:1662px;top:1062px;width:12px;height:1.6px;background:#fff;"></div>
<div class="a" style="left:1682px;top:1062px;width:148px;height:2px;background:#c8c8c8;"></div>
<div class="a" style="left:1755px;top:1057px;width:2px;height:12px;background:#c8c8c8;"></div>
<div class="a" style="left:1759px;top:1054px;width:8px;height:18px;background:#c8c8c8;border-radius:1px;"></div>
<svg style="left:1837px;top:1055px;" width="14" height="14" viewBox="0 0 14 14"><path d="M7 0.5 V13.5 M0.5 7 H13.5" stroke="#fff" stroke-width="1.5"/></svg>
<div class="t" style="left:1868.00px;top:1056.46px;font-size:16px;color:#fff;transform:scaleX(0.9775);transform-origin:0 0;">125%</div>
</body></html>
